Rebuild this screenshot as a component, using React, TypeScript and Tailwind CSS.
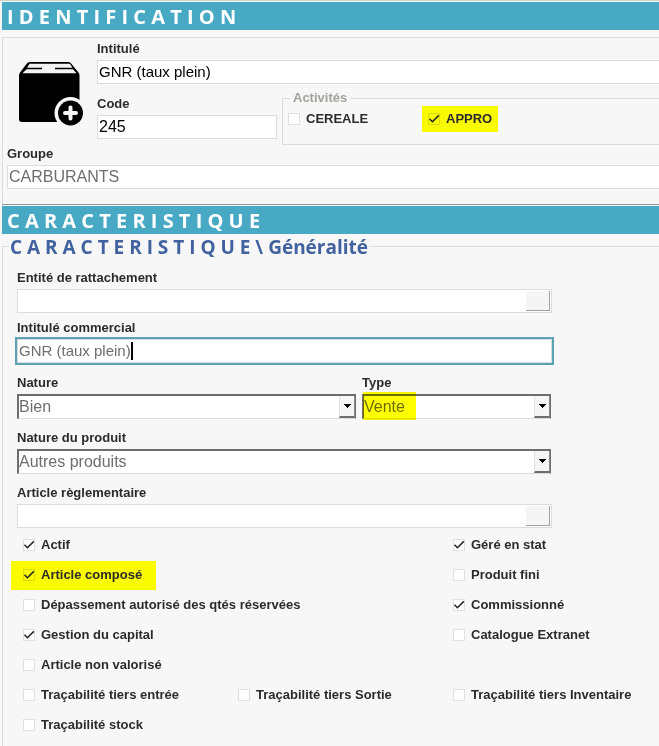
import React, { useId, useState } from 'react';
import { clsx } from 'clsx';

const SectionTitle: React.FC<{ children: React.ReactNode }> = ({ children }) => (
  <h2 className="h-7 bg-[#48a9c5] pl-[5px] font-['Open_Sans',sans-serif] text-xl leading-[30px] font-bold text-white">
    {children}
  </h2>
);

interface TextFieldProps {
  label: string;
  defaultValue?: string;
  className?: string;
  inputClassName?: string;
  lookup?: boolean;
  active?: boolean;
}

const TextField: React.FC<TextFieldProps> = ({
  label,
  defaultValue = '',
  className,
  inputClassName = 'text-[15px] text-[#6e6e6e]',
  lookup = false,
  active = false
}) => {
  const id = useId();

  return (
    <div className={className}>
      <label htmlFor={id} className="block pt-px pb-[3px] leading-4">{label}</label>
      <div className={clsx('relative flex h-6 border border-[#dcdcdc] bg-white', active && 'outline-2 outline-[#5aa3b5]')}>
        <input
          id={id}
          type="text"
          defaultValue={defaultValue}
          className={clsx('min-w-0 flex-1 px-px font-normal outline-none', active && 'caret-transparent', inputClassName)}
        />
        {/* Text cursor, placed after the typed value */}
        {active && (
          <span className="pointer-events-none absolute inset-y-0 left-px flex items-center whitespace-pre text-[15px] font-normal">
            <span className="invisible">{defaultValue}</span>
            <span className="h-[18px] w-0.5 bg-black" />
          </span>
        )}
        {lookup && (
          <button
            type="button"
            aria-label={label}
            className="m-px w-6 border-r border-b border-[#a0a0a0] bg-[#f5f5f5]"
          />
        )}
      </div>
    </div>
  );
};

interface SelectFieldProps {
  label: string;
  value: string;
  className?: string;
  highlight?: boolean;
}

const SelectField: React.FC<SelectFieldProps> = ({ label, value, className, highlight = false }) => {
  const id = useId();

  return (
    <div className={className}>
      <label htmlFor={id} className="block pt-px pb-[3px] leading-4">{label}</label>
      <div className="relative h-[25px] border-t-2 border-r border-b border-l-2 border-t-[#6d6d6d] border-r-[#6d6d6d] border-b-[#dcdcdc] border-l-[#6d6d6d] bg-white">
        <select
          id={id}
          defaultValue={value}
          className="block h-full w-full appearance-none text-base leading-5 font-normal text-[#6e6e6e] outline-none"
        >
          <option>{value}</option>
        </select>
        <span className="pointer-events-none absolute top-0 right-0 flex h-[22px] w-4 items-center justify-center border-r border-b-2 border-l border-r-[#8a8a8a] border-b-[#6d6d6d] border-l-[#e3e3e3] bg-[#f5f5f5]">
          <svg width="7" height="4" viewBox="0 0 7 4" shapeRendering="crispEdges">
            <path d="M0 0h7v1H6v1H5v1H4v1H3V3H2V2H1V1H0z" fill="#000" />
          </svg>
        </span>
        {highlight && (
          <span className="pointer-events-none absolute -top-1 -bottom-0.5 -left-px w-[53px] bg-[#ffff00] mix-blend-multiply" />
        )}
      </div>
    </div>
  );
};

interface CheckFieldProps {
  label: string;
  defaultChecked?: boolean;
  highlight?: boolean;
  className?: string;
}

const CheckField: React.FC<CheckFieldProps> = ({ label, defaultChecked = false, highlight = false, className }) => {
  const [checked, setChecked] = useState(defaultChecked);

  return (
    <label
      className={clsx(
        'inline-flex items-center gap-1.5 leading-4 whitespace-nowrap',
        highlight && 'bg-[#fafa00]',
        className
      )}
    >
      <span className="relative size-3">
        <input
          type="checkbox"
          checked={checked}
          onChange={(e) => setChecked(e.target.checked)}
          className={clsx(
            'block size-3 appearance-none border',
            highlight ? 'border-[#dcdc00]' : 'border-[#e0e0e0] bg-white'
          )}
        />
        {checked && (
          <svg className="pointer-events-none absolute inset-0" width="12" height="12" viewBox="0 0 12 12" fill="none">
            <path d="M1.500 5.800 4.400 8.800 10.800 2.400" stroke="#222" strokeWidth="1.500" />
          </svg>
        )}
      </span>
      {label}
    </label>
  );
};

const BoxIcon = () => (
  <svg className="mt-[22px] ml-3 size-16 shrink-0" viewBox="0 0 64 64">
    <path d="M11 0h38q2.500 0 3.500 2l7 8.500q1 1.500 1 3V57q0 3-3 3H3q-3 0-3-3V13.500q0-1.500 1-3L7.500 2Q8.500 0 11 0z" fill="#000" />
    <path d="M10.500 1.800h39.500q1 0 1.500 1l2 3H36v1.500h18l3.500 4h-54l4-4h15.500V5.800H8l2-3z" fill="#f4f4f4" />
    <circle cx="51.500" cy="51" r="16" fill="#f7f7f7" />
    <circle cx="51.500" cy="51" r="12.500" fill="#000" />
    <path d="M51.500 45.500v11M46 51h11" stroke="#f7f7f7" strokeWidth="4" strokeLinecap="round" />
  </svg>
);

export default function App() {
  return (
    <div className="min-h-screen overflow-hidden border-t border-[#c9d3c9] bg-[#f7f7f7] pt-px pl-0.5 font-['Liberation_Sans',Arial,sans-serif] text-[13px] font-bold text-[#2b2b2b]">
      <SectionTitle>I D E N T I F I C A T I O N</SectionTitle>

      <section className="mt-[7px] border-t border-l border-[#dcdcdc] pt-0.5 pb-[15px] pl-1">
        <div className="flex gap-3.5">
          <BoxIcon />
          <div className="min-w-0 flex-1">
            <TextField label="Intitulé" defaultValue="GNR (taux plein)" inputClassName="text-[15px] text-black" className="-mr-px" />
            <div className="mt-1.5 flex gap-[5px]">
              <TextField
                label="Code"
                defaultValue="245"
                inputClassName="text-base text-black"
                className="w-[180px] pt-[5px]"
              />
              <fieldset className="-mr-px min-w-0 flex-1 border border-[#dcdcdc] pb-3 pl-[5px]">
                <legend className="ml-0.5 px-[3px] leading-4 text-[#a3a39b]">Activités</legend>
                <div className="flex">
                  <CheckField label="CEREALE" className="w-[134px]" />
                  <CheckField label="APPRO" defaultChecked highlight className="h-[26px] px-1.5" />
                </div>
              </fieldset>
            </div>
          </div>
        </div>
        <TextField label="Groupe" defaultValue="CARBURANTS" inputClassName="text-base text-[#6e6e6e]" className="-mr-px" />
      </section>

      <div className="mb-px h-px bg-[#8f9896]" />
      <SectionTitle>C A R A C T E R I S T I Q U E</SectionTitle>

      <fieldset className="min-h-[512px] min-w-0 border-t border-l border-[#dcdcdc] pl-3.5">
        <legend className="-ml-2 px-px pt-px font-['Open_Sans',sans-serif] text-[19px] leading-6 font-bold text-[#42629f]">
          C A R A C T E R I S T I Q U E \ Généralité
        </legend>

        <div className="max-w-[535px] pt-2.5">
          <TextField label="Entité de rattachement" lookup />
          <TextField label="Intitulé commercial" defaultValue="GNR (taux plein)" active className="mt-1.5" />
          <div className="mt-[11px] mr-px flex gap-1.5">
            <SelectField label="Nature" value="Bien" className="flex-[339]" />
            <SelectField label="Type" value="Vente" highlight className="flex-[189]" />
          </div>
          <SelectField label="Nature du produit" value="Autres produits" className="mt-2.5 mr-px" />
          <TextField label="Article règlementaire" lookup className="mt-2.5" />
        </div>

        {/* Three columns, the last one runs past the right edge */}
        <div className="mt-0.5 -mr-[9px] grid auto-rows-[30px] grid-cols-3 items-center justify-items-start pl-1.5">
          <CheckField label="Actif" defaultChecked className="col-span-2" />
          <CheckField label="Géré en stat" defaultChecked />
          <CheckField label="Article composé" defaultChecked highlight className="col-span-2 -ml-3 h-[29px] pr-3.5 pl-3" />
          <CheckField label="Produit fini" />
          <CheckField label="Dépassement autorisé des qtés réservées" className="col-span-2" />
          <CheckField label="Commissionné" defaultChecked />
          <CheckField label="Gestion du capital" defaultChecked className="col-span-2" />
          <CheckField label="Catalogue Extranet" />
          <CheckField label="Article non valorisé" className="col-span-3" />
          <CheckField label="Traçabilité tiers entrée" />
          <CheckField label="Traçabilité tiers Sortie" />
          <CheckField label="Traçabilité tiers Inventaire" />
          <CheckField label="Traçabilité stock" className="col-span-3" />
        </div>
      </fieldset>
    </div>
  );
}
